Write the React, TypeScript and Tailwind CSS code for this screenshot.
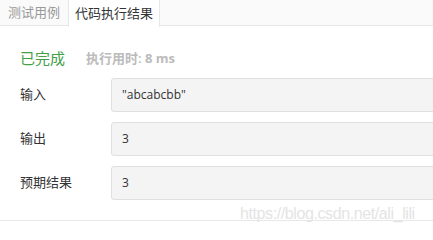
const rows = [
  { label: '输入', value: '"abcabcbb"' },
  { label: '输出', value: '3' },
  { label: '预期结果', value: '3' },
];

export default function App() {
  return (
    <div className="relative w-[433px] h-[232px] bg-white overflow-hidden font-['Open_Sans','Noto_Sans_CJK_SC',sans-serif]">
      <div className="flex h-[26px] bg-[#fafafa] border-b border-[#e8e8e8]">
        <div className="w-[68px] flex items-center justify-center text-[13px] text-[#999]">
          测试用例
        </div>
        <div className="w-[92px] h-[27px] -mb-px flex items-center justify-center bg-white border-x border-[#e8e8e8] text-[13px] text-[#333]">
          代码执行结果
        </div>
      </div>

      <div className="pt-[22px] pb-[20px] border-b border-[#e8e8e8]">
        <div className="flex items-center pl-[20px] leading-[20px]">
          <span className="text-[15px] text-[#43a047]">已完成</span>
          <span className="ml-[21px] text-[13px] font-semibold text-[#bbb]">
            执行用时: <strong className="font-bold">8 ms</strong>
          </span>
        </div>

        <div className="mt-[10px] flex flex-col gap-[10px]">
          {rows.map((row) => (
            <div key={row.label} className="flex items-center h-[34px]">
              <span className="w-[111px] pl-[20px] text-[13px] text-[#333]">
                {row.label}
              </span>
              <div className="flex-1 -mr-[4px] h-full flex items-center pl-[10px] bg-[#f4f4f4] border border-[#e0e0e0] rounded-[3px] text-[12px] text-[#333]">
                {row.value}
              </div>
            </div>
          ))}
        </div>
      </div>

      <div className="absolute left-[240px] top-[204px] text-[16px] leading-[20px] tracking-[-0.4px] text-[#e4e4e4] font-['Liberation_Sans',sans-serif] pointer-events-none">
        https://blog.csdn.net/ali_lili
      </div>
    </div>
  );
}
